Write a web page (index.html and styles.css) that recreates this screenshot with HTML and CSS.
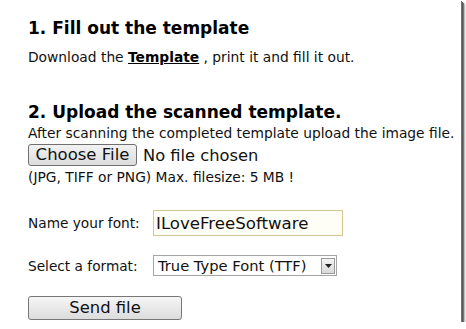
FILE: index.html
```html
<!DOCTYPE html>
<html lang="en">
<head>
    <meta charset="UTF-8">
    <title>Create your font</title>
    <link rel="stylesheet" href="styles.css">
</head>
<body>
    <div class="page">
        <div class="step">
            <h2>1. Fill out the template</h2>
            <p>Download the <a href="#">Template</a> , print it and fill it out.</p>
        </div>

        <form class="step upload-step">
            <h2>2. Upload the scanned template.</h2>
            <p>After scanning the completed template upload the image file.</p>
            <div class="file-row">
                <button type="button" class="file-button">Choose File</button>
                <span class="file-name">No file chosen</span>
            </div>
            <p>(JPG, TIFF or PNG) Max. filesize: 5 MB !</p>

            <div class="form-row name-row">
                <label for="fontName">Name your font:</label>
                <input type="text" id="fontName" class="text-input" value="ILoveFreeSoftware">
            </div>

            <div class="form-row format-row">
                <label for="format">Select a format:</label>
                <div class="select-box">
                    <span class="select-value">True Type Font (TTF)</span>
                    <span class="select-arrow">
                        <svg width="7" height="4" viewBox="0 0 7 4"><path d="M0 0h7L3.5 4z" fill="#222"/></svg>
                    </span>
                </div>
            </div>

            <button type="button" class="send-button">Send file</button>
        </form>
    </div>
</body>
</html>
```

FILE: styles.css
```css
body {
    margin: 0;
    background-color: #fff;
    font-family: "DejaVu Sans", Verdana, sans-serif;
    color: #111;
}

/* white sheet with the dark shadow on the right and bottom */
.page {
    width: 433px;
    height: 322px;
    padding-left: 28px;
    background-color: #fff;
    box-shadow: 1px 1px 0 #777, 2px 2px 0 #555, 3px 3px 1px #777, 4px 4px 2px #bbb;
    overflow: hidden;
}

.step h2 {
    margin: 0;
    font-size: 17px;
    line-height: 20px;
    font-weight: bold;
    color: #000;
}

.step p {
    margin: 2px 0 0;
    font-size: 13.8px;
    line-height: 18px;
}

.step:first-child {
    padding-top: 18px;
}

.step:first-child p {
    margin-top: 10px;
}

.step a {
    color: #000;
    font-weight: bold;
}

.upload-step {
    margin-top: 36px;
}

.file-row {
    display: flex;
    align-items: center;
    gap: 6px;
    margin-top: 2px;
}

.file-button {
    width: 109px;
    height: 22px;
    padding: 0;
    border: 1px solid #707070;
    border-radius: 3px;
    background: linear-gradient(#f2f2f2, #dcdcdc);
    font-family: inherit;
    font-size: 16.5px;
    line-height: 20px;
    color: #111;
}

.file-name {
    font-size: 16.3px;
}

.form-row {
    display: flex;
    align-items: center;
}

.form-row label {
    width: 125px;
    font-size: 13.7px;
}

.name-row {
    margin-top: 24px;
}

.text-input {
    width: 190px;
    height: 26px;
    box-sizing: border-box;
    padding: 0 2px;
    margin: 0;
    border: 1px solid #d7c58f;
    background-color: #fffef6;
    font-family: inherit;
    font-size: 16.6px;
    color: #111;
    outline: none;
}

.format-row {
    margin-top: 19px;
}

.select-box {
    display: flex;
    align-items: center;
    justify-content: space-between;
    box-sizing: border-box;
    width: 184px;
    height: 21px;
    padding: 0 1px 0 4px;
    border: 1px solid #a5a5a5;
    font-size: 14.7px;
}

.select-arrow {
    display: flex;
    align-items: center;
    justify-content: center;
    box-sizing: border-box;
    width: 14px;
    height: 16px;
    border: 1px solid #9a9a9a;
    background: linear-gradient(#f4f4f4, #d8d8d8);
}

.send-button {
    display: block;
    width: 154px;
    height: 24px;
    margin-top: 20px;
    padding: 0;
    border: 1px solid #777;
    border-radius: 3px;
    background: linear-gradient(#f6f6f6, #dcdcdc);
    font-family: inherit;
    font-size: 16.4px;
    line-height: 20px;
    color: #111;
}
```
